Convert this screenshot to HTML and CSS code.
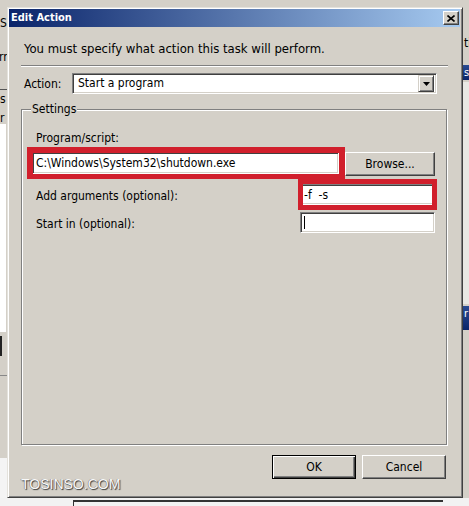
FILE: index.html
```html
<!DOCTYPE html>
<html>
<head>
<meta charset="utf-8">
<title>Edit Action</title>
<link rel="stylesheet" href="styles.css">
</head>
<body>
<div class="desktop">
  <div class="bg-left">
    <span class="frag fl1">Sc</span>
    <span class="frag fl2">rr</span>
    <span class="hline hl1"></span>
    <span class="frag fl3">s</span>
    <span class="frag fl4">r</span>
    <span class="white-pane wp1"></span>
    <span class="dark-bar"></span>
    <span class="hline hl2"></span>
    <span class="white-pane wp2"></span>
  </div>
  <div class="bg-right">
    <span class="frag fr1">ti</span>
    <span class="navy nv1">s</span>
    <span class="white-pane wp3"></span>
    <span class="navy nv2">r</span>
  </div>
  <div class="bg-bottom"><span class="table-edge"></span></div>

  <div class="dialog">
    <div class="titlebar">
      <span class="title">Edit Action</span>
      <span class="close" aria-label="Close">
        <svg width="8" height="7" viewBox="0 0 8 7"><path d="M0.5 0.5 L7.5 6.5 M7.5 0.5 L0.5 6.5" stroke="#000" stroke-width="1.6" fill="none"/></svg>
      </span>
    </div>
    <div class="dlg-body">
      <p class="intro">You must specify what action this task will perform.</p>
      <div class="sep"></div>
      <div class="action-row">
        <span class="action-label">Action:</span>
        <div class="combo">
          <span class="combo-text">Start a program</span>
          <span class="combo-btn"><svg width="7" height="4" viewBox="0 0 7 4"><polygon points="0,0 7,0 3.5,4" fill="#000"/></svg></span>
        </div>
      </div>
      <fieldset class="settings">
        <legend>Settings</legend>
        <div class="field-label">Program/script:</div>
        <div class="prog-row">
          <div class="textbox prog mark-prog">C:\Windows\System32\shutdown.exe</div>
          <span class="btn browse">Browse...</span>
        </div>
        <div class="opt-grid">
          <span class="opt-label">Add arguments (optional):</span>
          <div class="textbox opt mark-args">-f  -s</div>
          <span class="opt-label">Start in (optional):</span>
          <div class="textbox opt"><span class="caret"></span></div>
        </div>
      </fieldset>
      <div class="footer">
        <span class="btn default">OK</span>
        <span class="btn">Cancel</span>
      </div>
    </div>
    <div class="watermark">TOSINSO.COM</div>
  </div>
</div>
</body>
</html>
```

FILE: styles.css
```css
* { box-sizing: border-box; }
html, body { margin: 0; padding: 0; }
body {
  width: 469px;
  height: 506px;
  overflow: hidden;
  background: #d4d0c8;
  font-family: "DejaVu Sans Condensed", "DejaVu Sans", "Liberation Sans", sans-serif;
  font-size: 12px;
  color: #000;
}
.desktop { position: relative; width: 469px; height: 506px; overflow: hidden; }

/* background windows fragments */
.bg-left { position: absolute; left: 0; top: 0; width: 7px; height: 506px; overflow: hidden; background: #d4d0c8; }
.bg-right { position: absolute; right: 0; top: 0; width: 6px; height: 506px; overflow: hidden; background: #d4d0c8; }
.bg-bottom { position: absolute; left: 0; bottom: 0; width: 469px; height: 8px; background: #f2f2f2; }
.table-edge { position: absolute; left: 73px; top: 2px; width: 370px; height: 6px; border-top: 2px solid #333; border-left: 1px solid #333; }
.frag { position: absolute; font-size: 12px; line-height: 14px; }
.fl1 { left: 0; top: 16px; }
.fl2 { left: -1px; top: 50px; }
.fl3 { left: 0; top: 92px; }
.fl4 { left: 0; top: 111px; }
.fr1 { left: 1px; top: 36px; }
.hline { position: absolute; left: 0; width: 7px; height: 1px; background: #555; }
.hl1 { top: 89px; }
.hl2 { top: 375px; background: #888; }
.white-pane { position: absolute; background: #fff; }
.wp1 { left: 0; top: 124px; width: 6px; height: 208px; }
.wp2 { left: 0; top: 458px; width: 7px; height: 40px; background: #f4f4f4; }
.wp3 { left: 0; top: 82px; width: 6px; height: 222px; background: #e9e8e4; }
.dark-bar { position: absolute; left: 0; top: 336px; width: 2px; height: 20px; background: #222; }
.navy { position: absolute; left: 0; width: 6px; color: #fff; font-size: 11px; line-height: 15px; padding-left: 1px; background: linear-gradient(#2a4b93, #0a246a); }
.nv1 { top: 65px; height: 15px; }
.nv2 { top: 306px; height: 24px; }

/* dialog window */
.dialog {
  position: absolute;
  left: 7px;
  top: 7px;
  width: 456px;
  height: 491px;
  background: #d4d0c8;
  border: 1px solid;
  border-color: #e4e2dc #404040 #404040 #e4e2dc;
  box-shadow: inset 1px 1px 0 #fff, inset -1px -1px 0 #808080;
  padding: 1px 2px 2px 1px;
  display: flex;
  flex-direction: column;
}
.titlebar {
  height: 18px;
  flex: none;
  background: linear-gradient(to right, #0a246a, #a6caf0);
  display: flex;
  align-items: center;
  justify-content: space-between;
  padding: 0 1px 0 2px;
}
.title {
  color: #fff;
  font-weight: bold;
  font-size: 11px;
  line-height: 16px;
}
.close {
  width: 16px;
  height: 14px;
  background: #d4d0c8;
  border: 1px solid;
  border-color: #fff #404040 #404040 #fff;
  box-shadow: inset -1px -1px 0 #808080;
  display: flex;
  align-items: center;
  justify-content: center;
}
.close svg { display: block; }

.dlg-body {
  flex: 1;
  display: flex;
  flex-direction: column;
  padding: 14px 12px 16px 12px;
}
.intro { margin: 0 0 0 3px; line-height: 15px; font-size: 13px; }
.sep {
  margin-top: 9px;
  height: 2px;
  border-top: 1px solid #808080;
  border-bottom: 1px solid #fff;
}
.action-row {
  margin-top: 6px;
  display: flex;
  align-items: center;
  height: 21px;
}
.action-label { width: 51px; padding-left: 3px; flex: none; }
.combo {
  flex: 1;
  margin-right: 11px;
  height: 21px;
  background: #fff;
  border: 1px solid;
  border-color: #808080 #fff #fff #808080;
  box-shadow: inset 1px 1px 0 #404040, inset -1px -1px 0 #d4d0c8;
  display: flex;
  align-items: center;
  padding: 2px;
}
.combo-text { padding-left: 3px; line-height: 15px; }
.combo-btn {
  margin-left: auto;
  width: 16px;
  height: 17px;
  background: #d4d0c8;
  border: 1px solid;
  border-color: #d4d0c8 #404040 #404040 #d4d0c8;
  box-shadow: inset 1px 1px 0 #fff, inset -1px -1px 0 #808080;
  display: flex;
  align-items: center;
  justify-content: center;
}
.combo-btn svg { display: block; }

.settings {
  margin: 8px 1px 0 0;
  flex: 1;
  min-width: 0;
  border: 1px solid #808080;
  box-shadow: 1px 1px 0 #fff, inset 1px 1px 0 #fff;
  padding: 14px 11px 0 10px;
}
.settings legend {
  padding: 0 1px;
  margin-left: -1px;
  line-height: 15px;
  background: #d4d0c8;
}
.field-label { margin-left: 4px; line-height: 15px; }
.prog-row {
  margin-top: 6px;
  display: flex;
  align-items: flex-start;
  gap: 6px;
}
.textbox {
  position: relative;
  background: #fff;
  border: 1px solid;
  border-color: #808080 #fff #fff #808080;
  box-shadow: inset 1px 1px 0 #404040, inset -1px -1px 0 #d4d0c8;
  padding: 0 3px;
  display: flex;
  align-items: center;
  white-space: pre;
}
.textbox.prog { flex: 1; height: 22px; }
.textbox.opt { height: 21px; }
.mark-prog::after, .mark-args::after {
  content: "";
  position: absolute;
  border: 5px solid #d11f2c;
  pointer-events: none;
}
.mark-prog::after { left: -6px; top: -6px; right: -7px; bottom: -6px; border-width: 6px 6px 5px 6px; }
.mark-args::after { left: -3px; top: -6px; right: -3px; bottom: -6px; }
.caret { display: inline-block; width: 1px; height: 13px; background: #000; }

.btn {
  display: flex;
  align-items: center;
  justify-content: center;
  background: #d4d0c8;
  border: 1px solid;
  border-color: #fff #404040 #404040 #fff;
  box-shadow: inset -1px -1px 0 #808080, inset 1px 1px 0 #d4d0c8;
  height: 24px;
  line-height: 15px;
}
.browse { width: 90px; flex: none; }
.opt-grid {
  margin-top: 8px;
  display: grid;
  grid-template-columns: 1fr 135px;
  row-gap: 7px;
  align-items: center;
}
.opt-label { margin-left: 4px; line-height: 15px; padding-top: 3px; }

.footer {
  margin-top: 10px;
  display: flex;
  justify-content: flex-end;
  gap: 6px;
  padding-right: 2px;
}
.footer .btn { width: 84px; }
.btn.default {
  border: 1px solid #000;
  box-shadow: inset 1px 1px 0 #fff, inset -1px -1px 0 #404040, inset -2px -2px 0 #808080;
}
.watermark {
  position: absolute;
  left: 13px;
  top: 468px;
  font-family: "Liberation Sans", Arial, sans-serif;
  font-size: 14px;
  line-height: 16px;
  color: #f8f8f8;
  text-shadow: 1px 1px 1px #3a3a3a, -0.5px -0.5px 0 #777;
}
```
